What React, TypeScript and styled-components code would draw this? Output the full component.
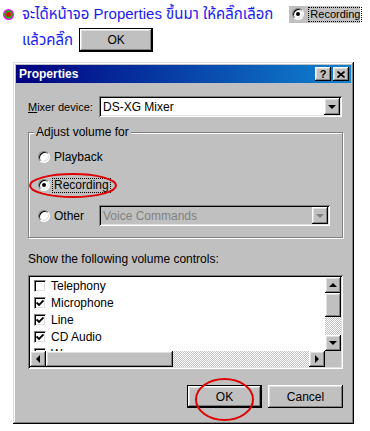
import React from "react";
import styled, { createGlobalStyle } from "styled-components";

const Global = createGlobalStyle`
  html, body { margin: 0; padding: 0; background: #fff; }
  body { font-family: "Liberation Sans", Arial, sans-serif; }
`;

const raised = `
  box-shadow: inset -1px -1px #000, inset 1px 1px #fff, inset -2px -2px #808080, inset 2px 2px #dfdfdf;
`;
const sunken = `
  box-shadow: inset 1px 1px #808080, inset -1px -1px #fff, inset 2px 2px #000, inset -2px -2px #dfdfdf;
`;

const Page = styled.div`
  width: 370px;
  height: 431px;
  overflow: hidden;
  box-sizing: border-box;
  padding: 5px 0 0 3px;
`;

const IntroLine = styled.div`
  display: flex;
  align-items: center;
  height: 18px;
  font: 15px "Liberation Sans", "Noto Sans Thai", Tahoma, sans-serif;
  color: #1a1aee;
  white-space: nowrap;
`;

const Bullet = styled.svg`
  width: 11px;
  height: 11px;
  flex: none;
  margin-right: 8px;
`;

const IntroLine2 = styled(IntroLine)`
  margin-top: 5px;
  height: 24px;
  padding-left: 19px;
`;

const Chip = styled.span`
  display: inline-flex;
  align-items: center;
  width: 71px;
  height: 17px;
  box-sizing: border-box;
  padding-left: 3px;
  margin-left: 16px;
  background: #c0c0c0;
  color: #000;
  font: 11px "Liberation Sans", Arial, sans-serif;
`;

const Radio = styled.span<{ $on?: boolean }>`
  position: relative;
  flex: none;
  width: 12px;
  height: 12px;
  box-sizing: border-box;
  border-radius: 50%;
  background: #fff;
  border: 1px solid;
  border-color: #808080 #fff #fff #808080;
  box-shadow: inset 1px 1px #000, inset -1px -1px #dfdfdf;
  &::after {
    content: "";
    display: ${(p) => (p.$on ? "block" : "none")};
    position: absolute;
    left: 3px;
    top: 3px;
    width: 4px;
    height: 4px;
    border-radius: 50%;
    background: #000;
  }
`;

const Focus = styled.span`
  outline: 1px dotted #000;
  outline-offset: 0;
  padding: 0 1px;
  line-height: 13px;
`;

const ChipLabel = styled(Focus)`
  margin-left: 5px;
`;

const Btn = styled.div<{ $def?: boolean; $w?: number }>`
  position: relative;
  width: ${(p) => p.$w ?? 75}px;
  height: 23px;
  box-sizing: border-box;
  display: flex;
  align-items: center;
  justify-content: center;
  background: #c0c0c0;
  color: #000;
  font: 12px "Liberation Sans", Arial, sans-serif;
  border: ${(p) => (p.$def ? "1px solid #000" : "none")};
  ${raised}
`;

const IntroBtn = styled(Btn)`
  margin-left: 6px;
  height: 24px;
`;

const Dialog = styled.div`
  margin: 10px 0 0 10px;
  width: 341px;
  height: 362px;
  box-sizing: border-box;
  padding: 3px;
  background: #c0c0c0;
  box-shadow: inset -1px -1px #000, inset 1px 1px #dfdfdf, inset -2px -2px #808080, inset 2px 2px #fff;
  font: 11px "Liberation Sans", Arial, sans-serif;
  color: #000;
  display: flex;
  flex-direction: column;
`;

const TitleBar = styled.div`
  height: 18px;
  flex: none;
  display: flex;
  align-items: center;
  justify-content: space-between;
  padding: 0 2px 0 3px;
  background: linear-gradient(90deg, #000080, #1084d0);
`;

const Title = styled.span`
  color: #fff;
  font: bold 12px "Liberation Sans", Arial, sans-serif;
`;

const TitleButtons = styled.div`
  display: flex;
  gap: 2px;
`;

const TitleBtn = styled.div`
  width: 16px;
  height: 14px;
  box-sizing: border-box;
  background: #c0c0c0;
  display: flex;
  align-items: center;
  justify-content: center;
  font: bold 11px "Liberation Sans", Arial, sans-serif;
  color: #000;
  ${raised}
`;

const Body = styled.div`
  padding: 13px 8px 0 12px;
  display: flex;
  flex-direction: column;
`;

const Row = styled.div`
  display: flex;
  align-items: center;
`;

const FieldLabel = styled.span`
  width: 71px;
  flex: none;
  font-size: 11px;
  u { text-decoration: underline; }
`;

const Combo = styled.div<{ $w: number; $disabled?: boolean }>`
  width: ${(p) => p.$w}px;
  height: 21px;
  box-sizing: border-box;
  padding: 2px;
  display: flex;
  align-items: center;
  background: ${(p) => (p.$disabled ? "#c0c0c0" : "#fff")};
  color: ${(p) => (p.$disabled ? "#808080" : "#000")};
  ${sunken}
`;

const ComboText = styled.span`
  flex: 1;
  padding-left: 2px;
  font-size: 12px;
`;

const ArrowBtn = styled.div`
  width: 16px;
  height: 17px;
  flex: none;
  box-sizing: border-box;
  background: #c0c0c0;
  display: flex;
  align-items: center;
  justify-content: center;
  ${raised}
`;

const Group = styled.div`
  position: relative;
  margin-top: 15px;
  height: 106px;
  box-sizing: border-box;
  border: 1px solid #808080;
  box-shadow: 1px 1px #fff, inset 1px 1px #fff;
  padding: 15px 12px 0 9px;
  display: flex;
  flex-direction: column;
`;

const Legend = styled.span`
  position: absolute;
  top: -7px;
  left: 5px;
  padding: 0 2px;
  background: #c0c0c0;
  font-size: 12px;
  line-height: 13px;
`;

const RadioRow = styled.div<{ $mt?: number }>`
  position: relative;
  display: flex;
  align-items: center;
  height: 18px;
  margin-top: ${(p) => p.$mt ?? 0}px;
  font-size: 12px;
`;

const RadioText = styled.span`
  margin-left: 4px;
`;

const RadioFocus = styled(Focus)`
  margin-left: 3px;
`;

const OtherRow = styled.div`
  display: flex;
  align-items: center;
  margin-top: 11px;
  font-size: 12px;
`;

const OtherLead = styled.div`
  width: 61px;
  display: flex;
  align-items: center;
`;

const Ellipse = styled.svg`
  position: absolute;
  overflow: visible;
  pointer-events: none;
`;

const ShowLabel = styled.div`
  margin-top: 15px;
  height: 13px;
  line-height: 13px;
  font-size: 12px;
`;

const ListBox = styled.div`
  margin-top: 9px;
  height: 94px;
  box-sizing: border-box;
  padding: 2px;
  background: #fff;
  display: grid;
  grid-template-columns: 1fr 16px;
  grid-template-rows: 1fr 16px;
  ${sunken}
`;

const Items = styled.div`
  overflow: hidden;
  padding-left: 4px;
`;

const Item = styled.div`
  height: 17px;
  display: flex;
  align-items: center;
  font-size: 12px;
`;

const Check = styled.span`
  width: 12px;
  height: 12px;
  box-sizing: border-box;
  flex: none;
  margin-right: 5px;
  background: #fff;
  border: 1px solid;
  border-color: #808080 #fff #fff #808080;
  box-shadow: inset 1px 1px #000, inset -1px -1px #dfdfdf;
  display: flex;
  align-items: center;
  justify-content: center;
`;

const VScroll = styled.div`
  display: flex;
  flex-direction: column;
`;

const HScroll = styled.div`
  display: flex;
`;

const SBtn = styled.div`
  width: 16px;
  height: 16px;
  flex: none;
  box-sizing: border-box;
  background: #c0c0c0;
  display: flex;
  align-items: center;
  justify-content: center;
  ${raised}
`;

const Thumb = styled.div<{ $w?: number; $h?: number }>`
  flex: none;
  width: ${(p) => (p.$w ? `${p.$w}px` : "16px")};
  height: ${(p) => (p.$h ? `${p.$h}px` : "16px")};
  box-sizing: border-box;
  background: #c0c0c0;
  ${raised}
`;

const Track = styled.div`
  flex: 1;
  background: repeating-conic-gradient(#c0c0c0 0 25%, #fff 0 50%) 0 0 / 2px 2px;
`;

const Corner = styled.div`
  background: #c0c0c0;
`;

const Buttons = styled.div`
  margin-top: 16px;
  display: flex;
  justify-content: flex-end;
  gap: 6px;
`;

const Tri = ({ dir, color = "#000" }: { dir: "up" | "down" | "left" | "right"; color?: string }) => {
  const pts = {
    up: "4,1 0,5 8,5",
    down: "0,1 8,1 4,5",
    left: "5,0 5,8 1,4",
    right: "1,0 1,8 5,4",
  }[dir];
  const w = dir === "up" || dir === "down" ? 8 : 6;
  const h = dir === "up" || dir === "down" ? 6 : 8;
  return (
    <svg width={w} height={h} viewBox={`0 0 ${w} ${h}`}>
      <polygon points={pts} fill={color} />
    </svg>
  );
};

const CheckMark = () => (
  <svg width="8" height="8" viewBox="0 0 8 8">
    <polyline points="0.5,3.5 3,6 7.5,1.5" fill="none" stroke="#000" strokeWidth="1.8" />
  </svg>
);

const RedEllipse = ({ l, t, w, h }: { l: number; t: number; w: number; h: number }) => (
  <Ellipse width={w} height={h} viewBox={`0 0 ${w} ${h}`} style={{ left: l, top: t }}>
    <ellipse cx={w / 2} cy={h / 2} rx={w / 2 - 1} ry={h / 2 - 1} fill="none" stroke="#e00000" strokeWidth="2" />
  </Ellipse>
);

const items = [
  { label: "Telephony", on: false },
  { label: "Microphone", on: true },
  { label: "Line", on: true },
  { label: "CD Audio", on: true },
  { label: "Wave", on: true },
];

export default function App() {
  return (
    <>
      <Global />
      <Page>
        <IntroLine>
          <Bullet viewBox="0 0 11 11">
            <circle cx="5.5" cy="5.5" r="5.5" fill="#ff00ff" />
            <circle cx="5.5" cy="5.5" r="4.3" fill="#00c000" />
            <circle cx="5.5" cy="5.5" r="2.4" fill="#ff0000" />
          </Bullet>
          จะได้หน้าจอ Properties ขึ้นมา ให้คลิ๊กเลือก
          <Chip>
            <Radio $on />
            <ChipLabel>Recording</ChipLabel>
          </Chip>
        </IntroLine>
        <IntroLine2>
          แล้วคลิ๊ก
          <IntroBtn $def $w={74}>OK</IntroBtn>
        </IntroLine2>

        <Dialog>
          <TitleBar>
            <Title>Properties</Title>
            <TitleButtons>
              <TitleBtn>?</TitleBtn>
              <TitleBtn>
                <svg width="8" height="7" viewBox="0 0 8 7">
                  <path d="M0.5 0.5 L7.5 6.5 M7.5 0.5 L0.5 6.5" stroke="#000" strokeWidth="1.6" />
                </svg>
              </TitleBtn>
            </TitleButtons>
          </TitleBar>
          <Body>
            <Row>
              <FieldLabel>
                <u>M</u>ixer device:
              </FieldLabel>
              <Combo $w={243}>
                <ComboText>DS-XG Mixer</ComboText>
                <ArrowBtn>
                  <Tri dir="down" />
                </ArrowBtn>
              </Combo>
            </Row>

            <Group>
              <Legend>Adjust volume for</Legend>
              <RadioRow>
                <Radio />
                <RadioText>Playback</RadioText>
              </RadioRow>
              <RadioRow $mt={10}>
                <Radio $on />
                <RadioFocus>Recording</RadioFocus>
                <RedEllipse l={-9} t={-3} w={88} h={25} />
              </RadioRow>
              <OtherRow>
                <OtherLead>
                  <Radio />
                  <RadioText>Other</RadioText>
                </OtherLead>
                <Combo $w={231} $disabled>
                  <ComboText>Voice Commands</ComboText>
                  <ArrowBtn>
                    <Tri dir="down" color="#808080" />
                  </ArrowBtn>
                </Combo>
              </OtherRow>
            </Group>

            <ShowLabel>Show the following volume controls:</ShowLabel>
            <ListBox>
              <Items>
                {items.map((it) => (
                  <Item key={it.label}>
                    <Check>{it.on && <CheckMark />}</Check>
                    {it.label}
                  </Item>
                ))}
              </Items>
              <VScroll>
                <SBtn>
                  <Tri dir="up" />
                </SBtn>
                <Thumb $h={24} />
                <Track />
                <SBtn>
                  <Tri dir="down" />
                </SBtn>
              </VScroll>
              <HScroll>
                <SBtn>
                  <Tri dir="left" />
                </SBtn>
                <Thumb $w={127} />
                <Track />
                <SBtn>
                  <Tri dir="right" />
                </SBtn>
              </HScroll>
              <Corner />
            </ListBox>

            <Buttons>
              <Btn $def>
                OK
                <RedEllipse l={7} t={-8} w={59} h={43} />
              </Btn>
              <Btn>Cancel</Btn>
            </Buttons>
          </Body>
        </Dialog>
      </Page>
    </>
  );
}
